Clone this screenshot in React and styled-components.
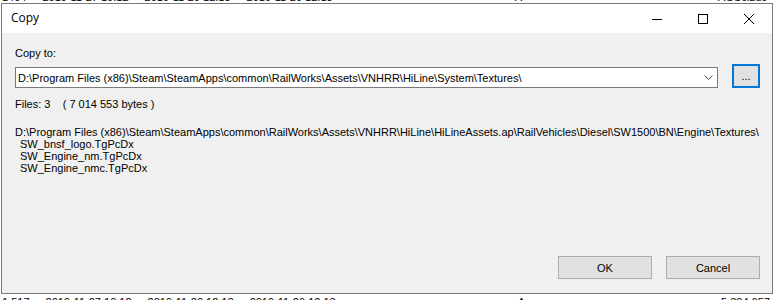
import React from "react";
import styled, { createGlobalStyle } from "styled-components";

const GlobalStyle = createGlobalStyle`
  html, body {
    margin: 0;
    padding: 0;
    background: #ffffff;
  }
  body {
    font-family: "Liberation Sans", Arial, sans-serif;
    font-size: 11px;
    color: #000;
  }
`;

const Page = styled.div`
  width: 781px;
  height: 300px;
  overflow: hidden;
  background: #fff;
`;

// the file list that sits behind the dialog, only its edges show
const BehindRow = styled.div`
  height: ${({ h }) => h}px;
  overflow: hidden;
  white-space: nowrap;
  font-size: 11px;
  line-height: 12px;
  div {
    margin-top: ${({ shift }) => shift}px;
    display: flex;
    gap: 16px;
    padding-left: 2px;
  }
`;

const Window = styled.div`
  margin-left: 1px;
  width: 770px;
  height: 289px;
  border: 1px solid #7a7a7a;
  display: flex;
  flex-direction: column;
  background: #f0f0f0;
`;

const TitleBar = styled.div`
  height: 29px;
  background: #fff;
  display: flex;
  align-items: center;
  flex-shrink: 0;
`;

const Title = styled.div`
  flex: 1;
  padding-left: 9px;
  font-family: "Open Sans", "Noto Sans", sans-serif;
  font-size: 12px;
  padding-bottom: 2px;
`;

const CaptionButton = styled.div`
  width: 46px;
  height: 29px;
  display: flex;
  align-items: center;
  justify-content: center;
  svg {
    display: block;
  }
`;

const Body = styled.div`
  flex: 1;
  display: flex;
  flex-direction: column;
  padding: 14px 12px 14px 13px;
  line-height: 12px;
`;

const Label = styled.div`
  height: 12px;
  margin-bottom: ${({ mb }) => mb || 0}px;
`;

const PathRow = styled.div`
  display: flex;
  align-items: flex-start;
  gap: 14px;
  margin-bottom: 10px;
`;

const Combo = styled.div`
  flex: 1;
  height: 19px;
  margin-top: 3px;
  border: 1px solid #7a7a7a;
  background: #fff;
  display: flex;
  align-items: center;
  padding-left: 2px;
  span {
    flex: 1;
    white-space: nowrap;
    overflow: hidden;
  }
  svg {
    margin: 0 4px;
  }
`;

const BrowseButton = styled.div`
  width: 24px;
  height: 20px;
  border: 2px solid #0078d7;
  background: #e1e1e1;
  display: flex;
  align-items: center;
  justify-content: center;
`;

const FileList = styled.div`
  white-space: nowrap;
  div {
    height: 12px;
  }
  .item {
    padding-left: 5px;
  }
`;

const Footer = styled.div`
  margin-top: auto;
  display: flex;
  justify-content: flex-end;
  gap: 14px;
`;

const Button = styled.div`
  width: 92px;
  height: 21px;
  border: 1px solid #adadad;
  background: #e1e1e1;
  display: flex;
  align-items: center;
  justify-content: center;
`;

export default function App() {
  return (
    <>
      <GlobalStyle />
      <Page>
        <BehindRow h={3} shift={-9}>
          <div>
            <span>1404</span>
            <span>2019-11-27 10:12</span>
            <span>2019-11-20 12:13</span>
            <span>2019-11-20 12:13</span>
            <span style={{ marginLeft: 166 }}>A</span>
            <span style={{ marginLeft: 180 }}>AGSc.zuc</span>
            <span>store</span>
          </div>
        </BehindRow>
        <Window>
          <TitleBar>
            <Title>Copy</Title>
            <CaptionButton>
              <svg width="10" height="10" viewBox="0 0 10 10">
                <path d="M0 5.5h10" stroke="#000" strokeWidth="1" />
              </svg>
            </CaptionButton>
            <CaptionButton>
              <svg width="10" height="10" viewBox="0 0 10 10">
                <rect x="0.5" y="0.5" width="9" height="9" fill="none" stroke="#000" />
              </svg>
            </CaptionButton>
            <CaptionButton>
              <svg width="10" height="10" viewBox="0 0 10 10">
                <path d="M0 0L10 10M10 0L0 10" stroke="#000" strokeWidth="1" />
              </svg>
            </CaptionButton>
          </TitleBar>
          <Body>
            <Label mb={5}>Copy to:</Label>
            <PathRow>
              <Combo>
                <span>D:\Program Files (x86)\Steam\SteamApps\common\RailWorks\Assets\VNHRR\HiLine\System\Textures\</span>
                <svg width="9" height="5" viewBox="0 0 9 5">
                  <path d="M0.5 0.5L4.5 4.5L8.5 0.5" fill="none" stroke="#444" />
                </svg>
              </Combo>
              <BrowseButton>...</BrowseButton>
            </PathRow>
            <Label mb={16}>Files: 3&nbsp;&nbsp;&nbsp;&nbsp;( 7 014 553 bytes )</Label>
            <FileList>
              <div>D:\Program Files (x86)\Steam\SteamApps\common\RailWorks\Assets\VNHRR\HiLine\HiLineAssets.ap\RailVehicles\Diesel\SW1500\BN\Engine\Textures\</div>
              <div className="item">SW_bnsf_logo.TgPcDx</div>
              <div className="item">SW_Engine_nm.TgPcDx</div>
              <div className="item">SW_Engine_nmc.TgPcDx</div>
            </FileList>
            <Footer>
              <Button>OK</Button>
              <Button>Cancel</Button>
            </Footer>
          </Body>
        </Window>
        <BehindRow h={6} shift={2}>
          <div>
            <span>1 517</span>
            <span>2019-11-27 10:12</span>
            <span>2019-11-20 12:13</span>
            <span>2019-11-20 12:13</span>
            <span style={{ marginLeft: 166 }}>A</span>
            <span style={{ marginLeft: 180 }}>5 384 657</span>
            <span>S</span>
          </div>
        </BehindRow>
      </Page>
    </>
  );
}
